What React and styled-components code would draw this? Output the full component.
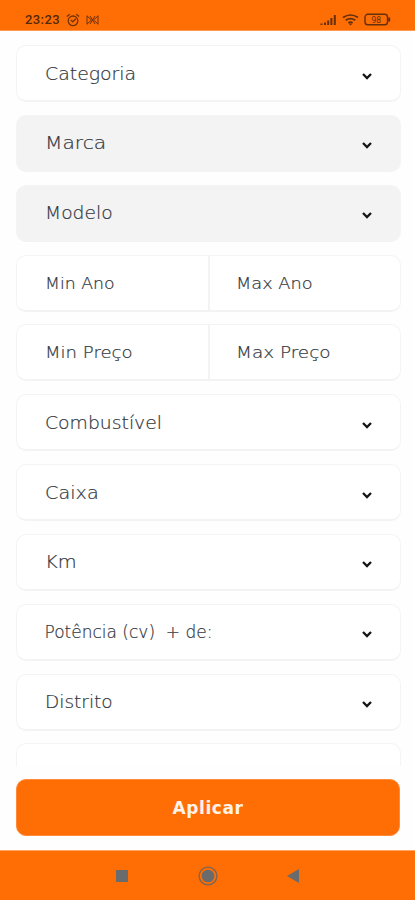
import React from "react";
import styled, { createGlobalStyle } from "styled-components";

const GlobalStyle = createGlobalStyle`
  body {
    margin: 0;
    overflow: hidden;
    background: #fefefe;
    font-family: "DejaVu Sans Light", "DejaVu Sans", sans-serif;
  }
`;

const filters = [
  { label: "Categoria", stretch: 1.11 },
  { label: "Marca", stretch: 1.19, disabled: true },
  { label: "Modelo", stretch: 1.1, disabled: true },
  {
    range: [
      { label: "Min Ano", stretch: 1.08 },
      { label: "Max Ano", stretch: 1.11 },
    ],
  },
  {
    range: [
      { label: "Min Preço", stretch: 1.13 },
      { label: "Max Preço", stretch: 1.15 },
    ],
  },
  { label: "Combustível", stretch: 1.105 },
  { label: "Caixa", stretch: 1.13 },
  { label: "Km", stretch: 1.14 },
  { label: "Potência (cv)  + de:", stretch: 1 },
  { label: "Distrito", stretch: 1.09 },
  { label: "", stretch: 1 },
];

function StatusIcons() {
  return (
    <svg width="71" height="14" viewBox="0 0 71 14" fill="none" stroke="#65300b">
      <path
        d="M1.5 12v-1.5M5 12V9.5M8.2 12V7.5M11.4 12V5M14.8 12V2"
        strokeWidth="2"
      />
      <path
        d="M23 4.5q7.5-5 15 0M25.7 7.3q4.8-3.2 9.6 0M28.3 9.8q2.2-1.4 4.4 0"
        strokeWidth="1.7"
      />
      <path d="M28.5 10.5h4l-2 2z" fill="#65300b" stroke="none" />
      <rect x="45" y="1.3" width="22.5" height="10.5" rx="2.8" strokeWidth="1.4" />
      <path d="M69.2 4.5v4" strokeWidth="2" />
      <text
        x="56.2"
        y="9.6"
        textAnchor="middle"
        fontSize="8.5"
        fontFamily="Roboto, sans-serif"
        fill="#65300b"
        stroke="none"
      >
        98
      </text>
    </svg>
  );
}

function AlarmIcons() {
  return (
    <svg width="34" height="14" viewBox="0 0 34 14" fill="none" stroke="#713409">
      <circle cx="7" cy="7.8" r="4.8" strokeWidth="1.3" />
      <path d="M.8 3.5l3-2.2M13.2 3.5l-3-2.2M4.8 7l2 1.8 3-3" strokeWidth="1.3" />
      <path
        d="M21 2.5v9M21 3l4.5 4-4.5 4M32 2.5v9M32 3l-4.5 4 4.5 4M24 3l5 8M29 3l-5 8"
        strokeWidth="1"
      />
    </svg>
  );
}

function Chevron() {
  return (
    <svg width="12" height="8" viewBox="0 0 12 8" fill="none">
      <path d="M2 2l4 4 4-4" stroke="#151515" strokeWidth="2.3" />
    </svg>
  );
}

function Filter({ filter }) {
  if (filter.range) {
    return (
      <Field>
        {filter.range.map((item) => (
          <Half key={item.label}>
            <Label $stretch={item.stretch} $small>
              {item.label}
            </Label>
          </Half>
        ))}
      </Field>
    );
  }

  return (
    <Field $disabled={filter.disabled}>
      <Select>
        <Label $stretch={filter.stretch}>{filter.label}</Label>
        <Chevron />
      </Select>
    </Field>
  );
}

function App() {
  return (
    <>
      <GlobalStyle />
      <Screen>
        <StatusBar>
          <StatusGroup>
            <Clock>23:23</Clock>
            <AlarmIcons />
          </StatusGroup>
          <StatusIcons />
        </StatusBar>
        <FilterList>
          {filters.map((filter, i) => (
            <Filter key={i} filter={filter} />
          ))}
        </FilterList>
        <Footer>
          <ApplyButton>Aplicar</ApplyButton>
        </Footer>
        <NavBar>
          <svg width="192" height="22" viewBox="0 0 192 22" fill="#696b6c">
            <path d="M4 5h12v12H4z" />
            <circle cx="96" cy="11" r="6.3" />
            <circle cx="96" cy="11" r="8.9" fill="none" stroke="#7b6755" strokeWidth="1.4" />
            <path d="M175 11l12-7v14z" />
          </svg>
        </NavBar>
      </Screen>
    </>
  );
}

const Screen = styled.div`
  display: flex;
  flex-direction: column;
  width: 415px;
  height: 900px;
`;

const StatusBar = styled.header`
  box-sizing: border-box;
  display: flex;
  flex: none;
  align-items: center;
  justify-content: space-between;
  height: 31px;
  padding: 9px 24px 0 25px;
  background: #ff6d05;
  border-bottom: 1px solid #ff9a52;
`;

const StatusGroup = styled.div`
  display: flex;
  align-items: center;
  gap: 6px;
`;

const Clock = styled.span`
  color: #55280a;
  font-family: Roboto, sans-serif;
  font-size: 13px;
  font-weight: 500;
  line-height: 14px;
  letter-spacing: 0.4px;
`;

const FilterList = styled.main`
  box-sizing: border-box;
  display: flex;
  flex: none;
  flex-direction: column;
  gap: 12.85px;
  height: 735px;
  padding: 14px 14px 0 16px;
  overflow: hidden;
`;

const Field = styled.div`
  box-sizing: border-box;
  display: flex;
  flex: none;
  height: 57px;
  overflow: hidden;
  background: ${(props) => (props.$disabled ? "#f3f3f3" : "#fff")};
  border: 1px solid #f4f4f4;
  border-bottom: 2px solid #f3f3f3;
  border-radius: 10px;
`;

const Select = styled.div`
  display: flex;
  flex: 1;
  align-items: center;
  justify-content: space-between;
  padding: 5px 27px 0 27.5px;
`;

const Half = styled.div`
  box-sizing: border-box;
  display: flex;
  flex: 0 0 191px;
  align-items: center;
  padding: 6px 0 0 27.5px;

  & + & {
    flex: 1;
    border-left: 2px solid #f3f3f3;
    padding-left: 26px;
  }
`;

const Label = styled.span`
  color: #32373d;
  font-size: ${(props) => (props.$small ? 16 : 17)}px;
  font-weight: 200;
  line-height: 24px;
  white-space: pre;
  -webkit-text-stroke: 0.2px #32373d;
  transform: translateY(-1.6px) scaleX(${(props) => props.$stretch});
  transform-origin: left center;
`;

const Footer = styled.footer`
  flex: none;
  height: 84px;
  box-sizing: border-box;
  padding: 13px 15px 0 16px;
`;

const ApplyButton = styled.button`
  display: block;
  width: 100%;
  height: 57px;
  padding: 0;
  color: #fff3e9;
  background: #ff6d05;
  border: 1px solid #ff8a39;
  border-radius: 10px;
  font-family: "DejaVu Sans", sans-serif;
  font-size: 17px;
  font-weight: 700;
  letter-spacing: 0.6px;
`;

const NavBar = styled.nav`
  display: flex;
  flex: 1;
  align-items: center;
  justify-content: center;
  padding-left: 1px;
  background: #ff6d05;
  border-top: 1px solid #ffa564;
`;

export default App;
